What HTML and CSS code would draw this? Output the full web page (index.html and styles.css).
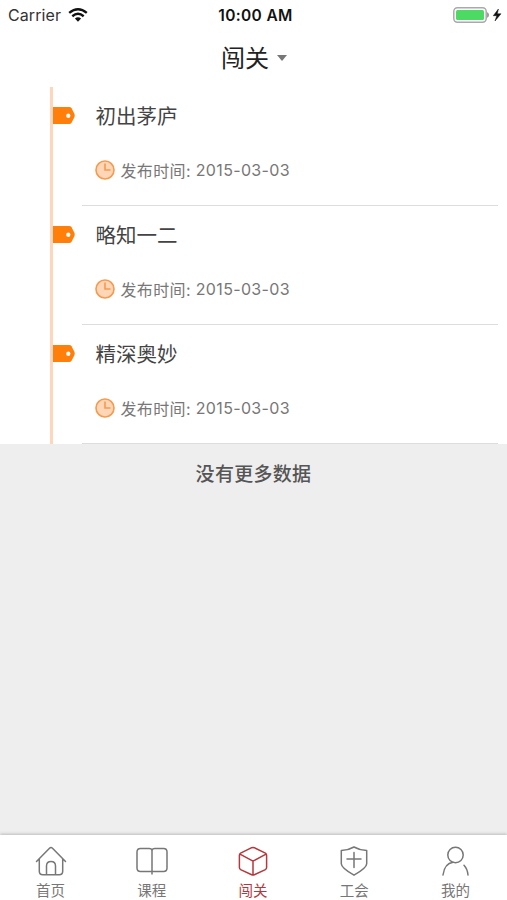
FILE: index.html
```html
<!DOCTYPE html>
<html lang="zh-CN">
<head>
<meta charset="utf-8">
<title>闯关</title>
<link rel="stylesheet" href="styles.css">
</head>
<body>
<header class="status">
  <div class="carrier"><span>Carrier</span>
    <svg class="wifi" width="20" height="14" viewBox="0 0 20 14" fill="none" stroke="#111" stroke-width="2.4"><path d="M1.2 4.9Q10-2.3 18.8 4.9M4.3 8.2Q10 3.5 15.7 8.2"/><path d="M6.9 10.6Q10 8 13.1 10.6L10 13.8Z" fill="#111" stroke="none"/></svg>
  </div>
  <span class="clock">10:00 AM</span>
  <svg class="battery" width="50" height="18" viewBox="0 0 50 18"><rect x=".8" y="1.8" width="32.4" height="14.4" rx="3.6" fill="#fff" stroke="#a9a9ad" stroke-width="1.5"/><rect x="3" y="4" width="28" height="10" rx="1.5" fill="#4cd964"/><path d="M34.6 6.7Q36.500 9 34.600 11.300Z" fill="#999" stroke="#999"/><path d="M45.400 3L40.300 9.700h3.500L42 15l6-7.200h-3.700Z" fill="#111" stroke="#111" stroke-width=".5"/></svg>
</header>
<div class="title"><h1>闯关</h1><i class="caret"></i></div>
<main>
  <ul class="levels">
    <li class="level">
      <svg class="tag" width="22" height="17" viewBox="0 0 23 17" preserveAspectRatio="none"><path d="M0 0h17q1.500 0 2.400 1.200l2.800 5.300q1 2 0 4l-2.800 5.300Q18.500 17 17 17H0Z" fill="#ff7f0a"/><circle cx="16" cy="8.700" r="2.200" fill="#fff"/></svg>
      <div class="body"><h2>初出茅庐</h2><p><svg class="time" width="20" height="20" viewBox="0 0 20 20" fill="none" stroke="#f79a4b" stroke-width="1.600"><circle cx="10" cy="10" r="9" fill="#ffd6b8"/><path d="M10 3.500V10h5.500"/></svg>发布时间: <span class="date">2015-03-03</span></p></div>
    </li>
    <li class="level">
      <svg class="tag" width="22" height="17" viewBox="0 0 23 17" preserveAspectRatio="none"><path d="M0 0h17q1.500 0 2.400 1.200l2.800 5.300q1 2 0 4l-2.800 5.300Q18.500 17 17 17H0Z" fill="#ff7f0a"/><circle cx="16" cy="8.700" r="2.200" fill="#fff"/></svg>
      <div class="body"><h2>略知一二</h2><p><svg class="time" width="20" height="20" viewBox="0 0 20 20" fill="none" stroke="#f79a4b" stroke-width="1.600"><circle cx="10" cy="10" r="9" fill="#ffd6b8"/><path d="M10 3.500V10h5.500"/></svg>发布时间: <span class="date">2015-03-03</span></p></div>
    </li>
    <li class="level">
      <svg class="tag" width="22" height="17" viewBox="0 0 23 17" preserveAspectRatio="none"><path d="M0 0h17q1.500 0 2.400 1.200l2.800 5.300q1 2 0 4l-2.800 5.300Q18.500 17 17 17H0Z" fill="#ff7f0a"/><circle cx="16" cy="8.700" r="2.200" fill="#fff"/></svg>
      <div class="body"><h2>精深奥妙</h2><p><svg class="time" width="20" height="20" viewBox="0 0 20 20" fill="none" stroke="#f79a4b" stroke-width="1.600"><circle cx="10" cy="10" r="9" fill="#ffd6b8"/><path d="M10 3.500V10h5.500"/></svg>发布时间: <span class="date">2015-03-03</span></p></div>
    </li>
  </ul>
  <p class="end">没有更多数据</p>
</main>
<nav class="tabs">
  <a class="tab"><svg viewBox="0 0 32 32"><path d="M1.500 16.500L14.500 3.200q1.500-1.400 3 0L30.500 16.500M4.300 14v12.200q0 3.500 3.500 3.500h16.400q3.500 0 3.500-3.500V14M11.500 29.500V21q0-4.500 4.500-4.500t4.500 4.500v8.500"/></svg>首页</a>
  <a class="tab"><svg viewBox="0 0 32 32"><path d="M4.500 3.500H13q3 0 3 2 0-2 3-2h8.500q3.500 0 3.500 3.500v16q0 3.500-3.500 3.500h-23Q1 26.500 1 23V7q0-3.500 3.500-3.500ZM16 5v24"/></svg>课程</a>
  <a class="tab active"><svg viewBox="0 0 32 32"><path d="M14.700 2.700L3.600 8.200Q2.400 8.900 2.400 10.300v12.300q0 1.400 1.200 2l11.100 5.200q1.300.6 2.600 0l11.100-5.200q1.200-.6 1.200-2V10.300q0-1.400-1.200-2.100L17.300 2.700q-1.300-.6-2.600 0ZM3 9.200l13 6.900 13-6.900M16 16.100v14"/></svg>闯关</a>
  <a class="tab"><svg viewBox="0 0 32 32"><path d="M16 2q5.500 3.200 12.700 3.600v13.200Q28.700 23 16 30.200 3.300 23 3.300 18.800V5.600Q10.500 5.200 16 2ZM16 7.500v15M9 14h14"/></svg>工会</a>
  <a class="tab"><svg viewBox="0 0 32 32"><circle cx="16.500" cy="10" r="7.700"/><path d="M14 17.300Q5.500 18.500 4 30M25 20.300q3.500 3.700 4 9.700"/></svg>我的</a>
</nav>
</body>
</html>
```

FILE: styles.css
```css
* { box-sizing: border-box; margin: 0; padding: 0; }
body {
  width: 507px; height: 900px; overflow: hidden;
  display: flex; flex-direction: column;
  background: #fff; color: #333;
  font-family: Inter, "Noto Sans CJK SC", sans-serif;
}
svg { display: block; flex: none; }
.status { height: 30px; display: grid; grid-template-columns: 1fr auto 1fr; align-items: center; padding: 0 4px 0 8px; }
.carrier { display: flex; align-items: center; gap: 7px; font-size: 16px; letter-spacing: .1px; }
.clock { font-size: 15.5px; font-weight: 600; color: #111; letter-spacing: .35px; }
.battery { justify-self: end; }
.title { height: 57px; display: flex; justify-content: center; align-items: center; gap: 8px; padding-left: 1px; }
.title h1 { font-size: 24px; font-weight: 400; line-height: 36px; color: #222; }
.caret { margin-top: -2px; border: 5px solid transparent; border-top: 6px solid #777; border-bottom: 0; }
main { flex: 1; background: #eee; }
.levels { list-style: none; background: #fff; }
.level { height: 119px; margin-left: 50px; border-left: 3px solid #ffd5bc; display: flex; }
.tag { margin-top: 20px; }
.body { flex: 1; margin: 0 9px 0 7px; padding: 15px 0 0 13.5px; border-bottom: 1px solid #ddd; }
.body h2 { font-size: 20.5px; line-height: 30px; font-weight: 400; color: #444; }
.body p { display: flex; align-items: center; height: 24px; margin-top: 26px; margin-left: -1px; font-size: 16px; letter-spacing: .35px; color: #777; white-space: pre; }
.time { margin-right: 6px; }
.end { padding-top: 16px; text-align: center; font-size: 19px; line-height: 30px; font-weight: 500; letter-spacing: .3px; color: #555; }
.tabs { height: 65px; display: flex; background: #fff; position: relative; box-shadow: 0 -1px 3px #bbb; padding-right: 1px; }
.tab { flex: 1; display: flex; flex-direction: column; align-items: center; padding-top: 10px; font-size: 14.5px; line-height: 22px; color: #777; }
.tab svg { width: 32px; height: 32px; margin-bottom: 3px; fill: none; stroke: currentColor; stroke-width: 1.5; stroke-linecap: round; stroke-linejoin: round; }
.tab.active { color: #b5383d; }
```
